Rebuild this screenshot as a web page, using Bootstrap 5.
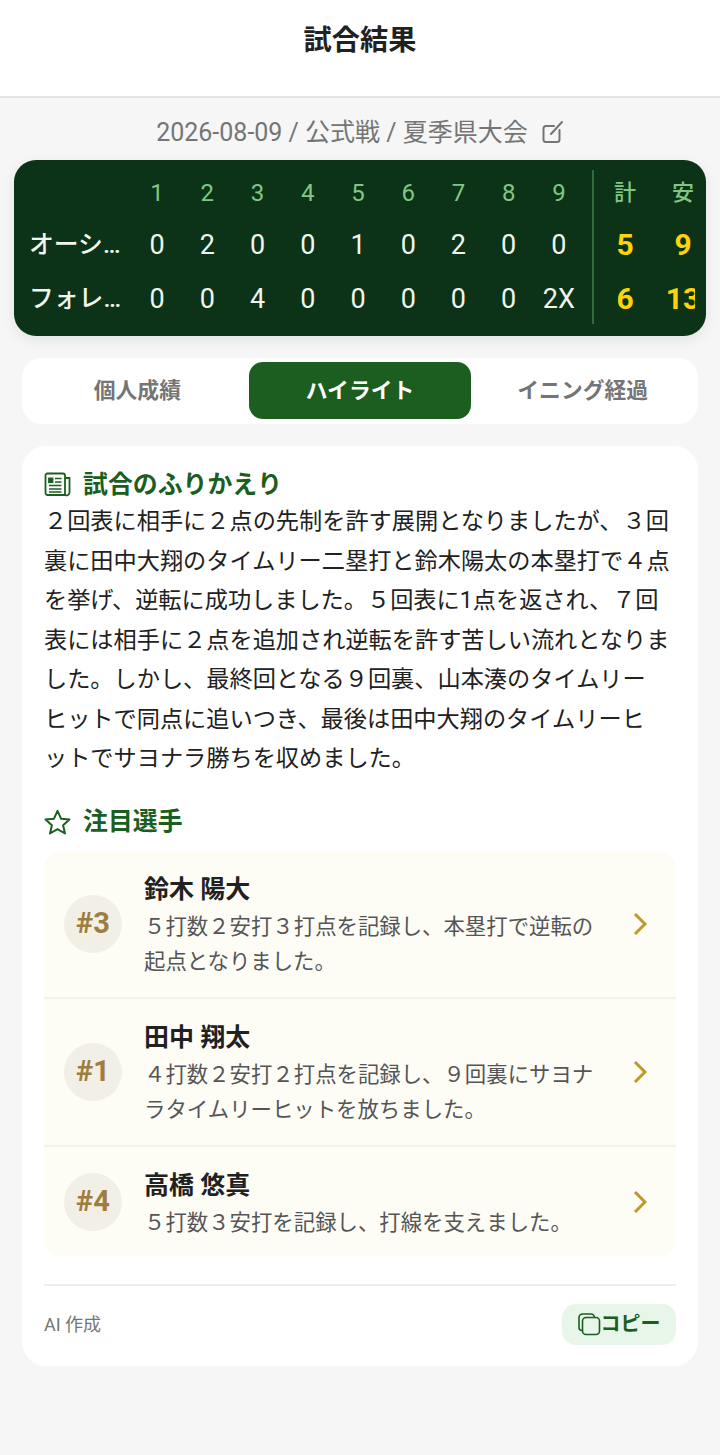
<!doctype html>
<html lang="ja">
<head>
<meta charset="utf-8">
<title>試合結果</title>
<link href="https://cdn.jsdelivr.net/npm/bootstrap@5.3.0/dist/css/bootstrap.min.css" rel="stylesheet">
<style>
body{background:#f6f6f6;font-family:Roboto,"Noto Sans CJK JP",sans-serif;color:#212121;min-height:1455px}
.top-bar{height:98px;background:#fff;border-bottom:2px solid #e2e3e3;padding-top:21px;font-size:28.2px;font-weight:700;line-height:40px;color:#212121}
.meta-line{height:62px;padding-top:18px;font-size:25px;line-height:34px;color:#757575;gap:14px}
.score-board{margin:0 14px;height:176px;background:#0c3317;border-radius:22px;overflow:hidden;box-shadow:0 4px 14px rgba(0,0,0,.08);padding:8px 13px 10px 16px;color:#f0f5ee}
.name-col{width:102px;flex:none}
.name-col div,.inn-row div,.tot-col div{height:54px;line-height:54px;white-space:nowrap}
.name-col div:first-child,.inn-row:first-child div,.tot-col div:first-child{height:50px;line-height:50px}
.name-text{font-size:24.8px;font-weight:500;margin-left:-1px}
.inn-grid{width:452px;flex:none;font-size:27px}
.inn-row{display:grid;grid-template-columns:repeat(9,1fr);text-align:center}
.inn-row:first-child{font-size:24px;color:#81c784}
.tot-col div:first-child{font-size:22px;color:#81c784}
.sep-line{width:2px;background:#2e6b3d;flex:none;margin:2px 0 2px 8px}
.tot-col{flex:none;text-align:center;font-size:30px;font-weight:700;color:#fdd40a}
.tot-a{width:62px}
.tot-b{width:54px}
.tot-clip{width:101px;overflow:hidden;flex:none}
.tot-clip>div{width:116px;display:flex}
.tot-col div:first-child{font-weight:500}
.tab-wrap{margin:22px 22px 0;height:66px;background:#fff;border-radius:20px;padding:4px}
.tab-item{font-size:21.8px;font-weight:700;color:#757575;height:57px;line-height:57px;text-align:center;flex:1 1 0;border-radius:14px}
.tab-on{background:#1b5e20;color:#fff}
.main-panel{margin:22px 22px 0;height:920px;background:#fff;border-radius:24px;padding:22px 22px 0}
.sec-title{font-size:24.9px;font-weight:700;color:#1b5e20;line-height:34px;gap:12px}
.story{font-size:23.2px;line-height:39.5px;color:#212121;margin:0}
.second-title{margin-top:26px}
.pick-list{background:#fdfcf5;border-radius:16px;margin-top:12px}
.pick-item{padding:14px 29px 14px 20px;gap:22px;border-bottom:2px solid #f2f1ea;min-height:148px}
.pick-item:last-child{border-bottom:0;min-height:110px}
.num-ball{width:58px;height:58px;border-radius:50%;background:#f2efe6;color:#9e7e40;font-size:29px;font-weight:700;flex:none}
.pick-text{padding-top:5px}
.pick-name{font-size:25px;font-weight:700;line-height:34px;color:#212121;margin-bottom:2px}
.pick-desc{font-size:21.4px;line-height:35px;color:#555}
.foot-row{margin-top:27px;border-top:2px solid #eeeeee;padding-top:18px}
.ai-mark{font-size:18px;color:#757575}
.copy-btn{background:#e8f5e9;color:#1b5e20;border-radius:14px;height:41px;width:114px;font-size:20px;font-weight:700}
</style>
</head>
<body>
<div class="top-bar text-center">試合結果</div>
<div class="meta-line d-flex justify-content-center">
  <span>2026-08-09 / 公式戦 / 夏季県大会</span>
  <svg width="22" height="24" viewBox="0 0 22 24" fill="none" stroke="#757575" stroke-width="2" class="mt-1" stroke-linecap="round"><path d="M12 6H4a2.500 2.500 0 0 0-2.500 2.500v11A2.500 2.500 0 0 0 4 22h11a2.500 2.500 0 0 0 2.500-2.500V10"/><path d="M9 14 20 2"/></svg>
</div>
<div class="score-board d-flex">
  <div class="name-col">
    <div></div>
    <div class="name-text">オーシ…</div>
    <div class="name-text">フォレ…</div>
  </div>
  <div class="inn-grid">
    <div class="inn-row"><div>1</div><div>2</div><div>3</div><div>4</div><div>5</div><div>6</div><div>7</div><div>8</div><div>9</div></div>
    <div class="inn-row"><div>0</div><div>2</div><div>0</div><div>0</div><div>1</div><div>0</div><div>2</div><div>0</div><div>0</div></div>
    <div class="inn-row"><div>0</div><div>0</div><div>4</div><div>0</div><div>0</div><div>0</div><div>0</div><div>0</div><div>2X</div></div>
  </div>
  <div class="sep-line"></div>
  <div class="tot-clip"><div>
    <div class="tot-col tot-a"><div>計</div><div>5</div><div>6</div></div>
    <div class="tot-col tot-b"><div>安</div><div>9</div><div>13</div></div>
  </div></div>
</div>
<div class="tab-wrap d-flex">
  <div class="tab-item">個人成績</div>
  <div class="tab-item tab-on">ハイライト</div>
  <div class="tab-item">イニング経過</div>
</div>
<div class="main-panel">
  <div class="sec-title d-flex align-items-center">
    <svg width="27" height="26" viewBox="0 0 27 26" fill="none" stroke="#1b5e20" stroke-width="1.800"><path d="M21 23H3.500A2 2 0 0 1 1.500 21V3.500A2 2 0 0 1 3.500 1.500H19A2 2 0 0 1 21 3.500V23a3 3 0 0 0 4.500-2.500V6H21"/><path d="M5 6.500h3.500v3.500H5z" fill="#1b5e20"/><path d="M11 6.500h6.500M11 10h6.500M5 13.500h12.500M5 17h12.500M5 20h12.500" stroke-width="1.600"/></svg>
    <span>試合のふりかえり</span>
  </div>
  <p class="story">２回表に相手に２点の先制を許す展開となりましたが、３回<br>裏に田中大翔のタイムリー二塁打と鈴木陽太の本塁打で４点<br>を挙げ、逆転に成功しました。５回表に1点を返され、７回<br>表には相手に２点を追加され逆転を許す苦しい流れとなりま<br>した。しかし、最終回となる９回裏、山本湊のタイムリー<br>ヒットで同点に追いつき、最後は田中大翔のタイムリーヒ<br>ットでサヨナラ勝ちを収めました。</p>
  <div class="sec-title d-flex align-items-center second-title">
    <svg width="27" height="26" viewBox="0 0 27 26" fill="none" stroke="#1b5e20" stroke-width="2" stroke-linejoin="round"><path d="M13.500 1.800l3.500 7.900 8.500.8-6.400 5.700 1.900 8.300-7.500-4.400-7.500 4.400 1.900-8.300L1.500 10.500l8.500-.8z"/></svg>
    <span>注目選手</span>
  </div>
  <div class="pick-list">
    <div class="pick-item d-flex align-items-center">
      <div class="num-ball d-flex align-items-center justify-content-center">#3</div>
      <div class="flex-grow-1 pick-text"><div class="pick-name">鈴木 陽大</div><div class="pick-desc">５打数２安打３打点を記録し、本塁打で逆転の<br>起点となりました。</div></div>
      <svg width="14" height="24" viewBox="0 0 14 24" fill="none" stroke="#bd9a26" stroke-width="3"><path d="M2 2l10 10L2 22"/></svg>
    </div>
    <div class="pick-item d-flex align-items-center">
      <div class="num-ball d-flex align-items-center justify-content-center">#1</div>
      <div class="flex-grow-1 pick-text"><div class="pick-name">田中 翔太</div><div class="pick-desc">４打数２安打２打点を記録し、９回裏にサヨナ<br>ラタイムリーヒットを放ちました。</div></div>
      <svg width="14" height="24" viewBox="0 0 14 24" fill="none" stroke="#bd9a26" stroke-width="3"><path d="M2 2l10 10L2 22"/></svg>
    </div>
    <div class="pick-item d-flex align-items-center">
      <div class="num-ball d-flex align-items-center justify-content-center">#4</div>
      <div class="flex-grow-1 pick-text"><div class="pick-name">高橋 悠真</div><div class="pick-desc">５打数３安打を記録し、打線を支えました。</div></div>
      <svg width="14" height="24" viewBox="0 0 14 24" fill="none" stroke="#bd9a26" stroke-width="3"><path d="M2 2l10 10L2 22"/></svg>
    </div>
  </div>
  <div class="foot-row d-flex justify-content-between align-items-center">
    <span class="ai-mark">AI 作成</span>
    <div class="copy-btn d-flex align-items-center justify-content-center">
      <svg width="23" height="23" viewBox="0 0 23 23" fill="none" stroke="#1b5e20" stroke-width="1.600"><rect x="4.500" y="4.500" width="17" height="17" rx="3.500"/><path d="M4 17.500A3 3 0 0 1 1 14.500V4.500A3.500 3.500 0 0 1 4.500 1H13a3.500 3.500 0 0 1 3.500 3.500"/></svg>
      <span>コピー</span>
    </div>
  </div>
</div>
<script src="https://cdn.jsdelivr.net/npm/bootstrap@5.3.0/dist/js/bootstrap.bundle.min.js"></script>
</body>
</html>
